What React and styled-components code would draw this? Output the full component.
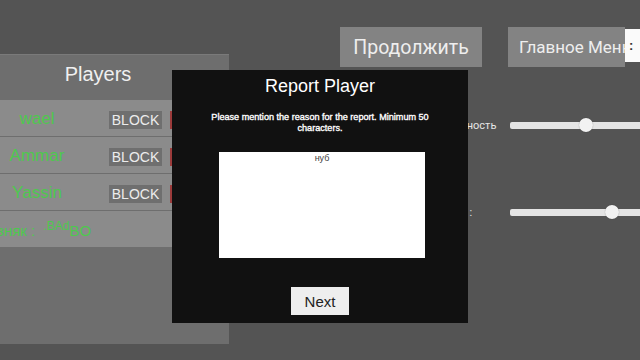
import React from 'react'
import styled, { createGlobalStyle } from 'styled-components'

const Global = createGlobalStyle`
  html, body { margin: 0; padding: 0; background: #545454; }
  body { font-family: "Liberation Sans", Arial, sans-serif; }
`

const Page = styled.div`
  position: relative;
  width: 640px;
  height: 360px;
  overflow: hidden;
  background: #545454;
  display: flex;
  align-items: flex-start;
`

const PlayersPanel = styled.div`
  margin-top: 54px;
  width: 229px;
  height: 290px;
  flex-shrink: 0;
  background: #6e6e6e;
  border-top: 1px solid #7a7a7a;
  box-sizing: border-box;
  display: flex;
  flex-direction: column;
`

const PanelTitle = styled.div`
  height: 45px;
  padding-top: 8px;
  box-sizing: border-box;
  width: 196px;
  text-align: center;
  color: #f0f0f0;
  font-size: 20px;
`

const PlayerList = styled.div`
  display: flex;
  flex-direction: column;
  gap: 1px;
  background: #6e6e6e;
`

const PlayerRow = styled.div`
  height: 36px;
  background: #8b8b8b;
  display: flex;
  align-items: center;
  overflow: hidden;
`

const PlayerName = styled.div`
  width: 74px;
  padding-top: 2px;
  text-align: center;
  color: #4ec84e;
  font-size: 17px;
`

const BlockButton = styled.div`
  margin-left: 35px;
  margin-top: 3px;
  width: 53px;
  height: 18px;
  background: #6f6f6f;
  color: #ececec;
  font-size: 14px;
  display: flex;
  align-items: center;
  justify-content: center;
`

const ReportButton = styled.div`
  margin-left: 8px;
  margin-top: 3px;
  width: 40px;
  height: 18px;
  background: #9c3b3b;
`

const StatusText = styled.div`
  margin-left: -3px;
  color: #4ec84e;
  font-size: 15px;
  white-space: nowrap;
  & sup { font-size: 12px; margin-left: 4px; }
`

const RightArea = styled.div`
  margin-left: 111px;
  padding-top: 27px;
  display: flex;
  flex-direction: column;
`

const MenuRow = styled.div`
  display: flex;
  gap: 26px;
`

const MenuButton = styled.div`
  height: 40px;
  width: ${p => p.$w}px;
  flex-shrink: 0;
  overflow: hidden;
  background: #838383;
  color: #eeeeee;
  font-family: Roboto, "Liberation Sans", sans-serif;
  font-size: ${p => p.$size}px;
  display: flex;
  align-items: center;
  justify-content: ${p => p.$left ? 'flex-start' : 'center'};
  padding-left: ${p => p.$left ? 11 : 0}px;
  box-sizing: border-box;
  white-space: nowrap;
`

const Settings = styled.div`
  margin-top: 43px;
  display: grid;
  grid-template-columns: 156px 200px;
  column-gap: 14px;
  row-gap: 57px;
`

const SettingLabel = styled.div`
  height: 30px;
  padding-left: 61px;
  display: flex;
  align-items: center;
  color: #e6e6e6;
  font-family: Roboto, "Liberation Sans", sans-serif;
  font-size: 11px;
  white-space: pre;
`

const Slider = styled.div`
  position: relative;
  height: 30px;
  display: flex;
  align-items: center;
`

const Track = styled.div`
  width: 100%;
  height: 7px;
  background: #e4e4e4;
  border-radius: 2px;
`

const Thumb = styled.div`
  position: absolute;
  top: 8px;
  width: 14px;
  height: 14px;
  margin-left: -7px;
  border-radius: 50%;
  background: #f2f2f2;
  box-shadow: 0 0 1px rgba(0,0,0,0.4);
`

const SideTab = styled.div`
  position: absolute;
  left: 625px;
  top: 29px;
  width: 20px;
  height: 33px;
  background: #fafafa;
  color: #333;
  font-size: 13px;
  font-weight: bold;
  padding-left: 4px;
  box-sizing: border-box;
  display: flex;
  align-items: center;
`

const Modal = styled.div`
  position: absolute;
  left: 172px;
  top: 70px;
  width: 296px;
  height: 253px;
  background: #111111;
  display: flex;
  flex-direction: column;
  align-items: center;
`

const ModalTitle = styled.div`
  margin-top: 6px;
  color: #ffffff;
  font-size: 18px;
  height: 22px;
`

const ModalText = styled.div`
  margin-top: 14px;
  width: 240px;
  text-align: center;
  color: #ffffff;
  font-size: 9.1px;
  -webkit-text-stroke: 0.35px #ffffff;
  line-height: 11px;
`

const ReasonBox = styled.div`
  margin-top: 18px;
  margin-left: 4px;
  width: 206px;
  height: 106px;
  background: #ffffff;
  color: #444;
  font-size: 9px;
  text-align: center;
  padding-top: 1px;
  box-sizing: border-box;
`

const NextButton = styled.div`
  margin-top: 29px;
  width: 58px;
  height: 28px;
  background: #eeeeee;
  color: #222;
  font-size: 15px;
  display: flex;
  align-items: center;
  justify-content: center;
`

const players = ['wael', 'Ammar', 'Yassin']

export default function App() {
  return (
    <>
      <Global />
      <Page>
        <PlayersPanel>
          <PanelTitle>Players</PanelTitle>
          <PlayerList>
            {players.map(name => (
              <PlayerRow key={name}>
                <PlayerName>{name}</PlayerName>
                <BlockButton>BLOCK</BlockButton>
                <ReportButton />
              </PlayerRow>
            ))}
            <PlayerRow>
              <StatusText>зняк : <sup>.BAd</sup>BO</StatusText>
            </PlayerRow>
          </PlayerList>
        </PlayersPanel>

        <RightArea>
          <MenuRow>
            <MenuButton $w={142} $size={19.5}>Продолжить</MenuButton>
            <MenuButton $w={117} $size={17} $left>Главное Меню</MenuButton>
          </MenuRow>
          <Settings>
            <SettingLabel>Чувствительность</SettingLabel>
            <Slider>
              <Track />
              <Thumb style={{ left: '38%' }} />
            </Slider>
            <SettingLabel>Громкость     :</SettingLabel>
            <Slider>
              <Track />
              <Thumb style={{ left: '51%' }} />
            </Slider>
          </Settings>
        </RightArea>

        <SideTab>:</SideTab>

        <Modal>
          <ModalTitle>Report Player</ModalTitle>
          <ModalText>Please mention the reason for the report. Minimum 50 characters.</ModalText>
          <ReasonBox>нуб</ReasonBox>
          <NextButton>Next</NextButton>
        </Modal>
      </Page>
    </>
  )
}
